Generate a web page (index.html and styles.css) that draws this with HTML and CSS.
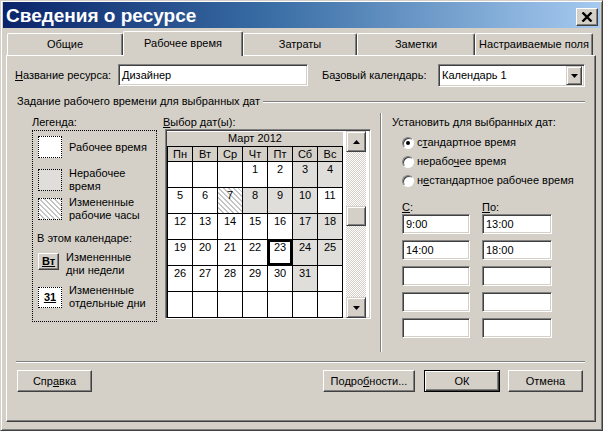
FILE: index.html
```html
<!DOCTYPE html>
<html lang="ru">
<head>
    <meta charset="UTF-8">
    <title>Сведения о ресурсе</title>
    <link rel="stylesheet" href="styles.css">
</head>
<body>
    <div class="window">
        <div class="titlebar">
            <span class="title">Сведения о ресурсе</span>
            <span class="close-btn">
                <svg width="12" height="10" viewBox="0 0 12 10"><path d="M1.5 0.5 L10.5 9.5 M10.5 0.5 L1.5 9.5" stroke="#000" stroke-width="2.4" fill="none"/></svg>
            </span>
        </div>

        <div class="tabs">
            <div class="tab tab-general">Общие</div>
            <div class="tab selected">Рабочее время</div>
            <div class="tab tab-cost">Затраты</div>
            <div class="tab tab-notes">Заметки</div>
            <div class="tab tab-fields">Настраиваемые поля</div>
        </div>

        <div class="panel">
            <div class="name-row">
                <label class="name-label"><u>Н</u>азвание ресурса:</label>
                <div class="field name-field">Дизайнер</div>
                <label class="base-label">Ба<u>з</u>овый календарь:</label>
                <div class="field select-field">
                    <span>Календарь 1</span>
                    <span class="drop-btn">
                        <svg width="7" height="4" viewBox="0 0 7 4"><path d="M0 0 H7 L3.5 4 Z" fill="#000"/></svg>
                    </span>
                </div>
            </div>

            <div class="group-title">
                <span>Задание рабочего времени для выбранных дат</span>
                <span class="etched-line"></span>
            </div>

            <div class="group-body">
                <div class="legend-col">
                    <div class="caption">Легенда:</div>
                    <div class="legend-box">
                        <div class="legend-item">
                            <div class="swatch"></div>
                            <div>Рабочее время</div>
                        </div>
                        <div class="legend-item item-nonwork">
                            <div class="swatch swatch-grey"></div>
                            <div>Нерабочее<br>время</div>
                        </div>
                        <div class="legend-item item-changed">
                            <div class="swatch swatch-hatch"></div>
                            <div>Измененные<br>рабочие часы</div>
                        </div>
                        <div class="legend-sub">В этом календаре:</div>
                        <div class="legend-item item-week">
                            <div class="day-mark mark-week">Вт</div>
                            <div>Измененные<br>дни недели</div>
                        </div>
                        <div class="legend-item item-days">
                            <div class="day-mark mark-day">31</div>
                            <div>Измененные<br>отдельные дни</div>
                        </div>
                    </div>
                </div>

                <div class="calendar-col">
                    <div class="caption"><u>В</u>ыбор дат(ы):</div>
                    <div class="calendar">
                        <div class="cal-main">
                            <div class="cal-month">Март 2012</div>
                            <div class="cal-grid">
                                <div class="dname">Пн</div>
                                <div class="dname">Вт</div>
                                <div class="dname">Ср</div>
                                <div class="dname">Чт</div>
                                <div class="dname">Пт</div>
                                <div class="dname">Сб</div>
                                <div class="dname">Вс</div>

                                <div class="day"></div>
                                <div class="day"></div>
                                <div class="day"></div>
                                <div class="day">1</div>
                                <div class="day">2</div>
                                <div class="day off">3</div>
                                <div class="day off">4</div>

                                <div class="day">5</div>
                                <div class="day">6</div>
                                <div class="day changed">7</div>
                                <div class="day off">8</div>
                                <div class="day off">9</div>
                                <div class="day off">10</div>
                                <div class="day">11</div>

                                <div class="day">12</div>
                                <div class="day">13</div>
                                <div class="day">14</div>
                                <div class="day">15</div>
                                <div class="day">16</div>
                                <div class="day off">17</div>
                                <div class="day off">18</div>

                                <div class="day">19</div>
                                <div class="day">20</div>
                                <div class="day">21</div>
                                <div class="day">22</div>
                                <div class="day current">23</div>
                                <div class="day off">24</div>
                                <div class="day off">25</div>

                                <div class="day">26</div>
                                <div class="day">27</div>
                                <div class="day">28</div>
                                <div class="day">29</div>
                                <div class="day">30</div>
                                <div class="day off">31</div>
                                <div class="day"></div>

                                <div class="day"></div>
                                <div class="day"></div>
                                <div class="day"></div>
                                <div class="day"></div>
                                <div class="day"></div>
                                <div class="day"></div>
                                <div class="day"></div>
                            </div>
                        </div>
                        <div class="scrollbar">
                            <div class="sb-btn">
                                <svg width="7" height="4" viewBox="0 0 7 4"><path d="M3.5 0 L7 4 H0 Z" fill="#000"/></svg>
                            </div>
                            <div class="sb-track">
                                <div class="sb-thumb"></div>
                            </div>
                            <div class="sb-btn">
                                <svg width="7" height="4" viewBox="0 0 7 4"><path d="M0 0 H7 L3.5 4 Z" fill="#000"/></svg>
                            </div>
                        </div>
                    </div>
                </div>

                <div class="vdivider"></div>

                <div class="set-col">
                    <div class="set-title">Установить для выбранных дат:</div>
                    <div class="radio-row"><span class="radio checked"></span><span>с<u>т</u>андартное время</span></div>
                    <div class="radio-row"><span class="radio"></span><span>нерабо<u>ч</u>ее время</span></div>
                    <div class="radio-row"><span class="radio"></span><span>н<u>е</u>стандартное рабочее время</span></div>

                    <div class="time-grid">
                        <div class="time-label"><u>С</u>:</div>
                        <div class="time-label"><u>П</u>о:</div>
                        <div class="field time-field">9:00</div>
                        <div class="field time-field">13:00</div>
                        <div class="field time-field">14:00</div>
                        <div class="field time-field">18:00</div>
                        <div class="field time-field"></div>
                        <div class="field time-field"></div>
                        <div class="field time-field"></div>
                        <div class="field time-field"></div>
                        <div class="field time-field"></div>
                        <div class="field time-field"></div>
                    </div>
                </div>
            </div>

            <div class="hseparator"></div>

            <div class="button-row">
                <div class="btn btn-help">Спр<u>а</u>вка</div>
                <div class="btn btn-details">Подро<u>б</u>ности...</div>
                <div class="btn btn-ok">ОК</div>
                <div class="btn btn-cancel">Отмена</div>
            </div>
        </div>
    </div>
</body>
</html>
```

FILE: styles.css
```css
body {
    margin: 0;
    padding: 0;
    font-family: "Liberation Sans", Arial, sans-serif;
    font-size: 11px;
    line-height: 13px;
    color: #000;
    background-color: #d4d0c8;
}

/* окно */
.window {
    width: 603px;
    height: 431px;
    box-sizing: border-box;
    background-color: #d4d0c8;
    border: 1px solid;
    border-color: #d4d0c8 #404040 #404040 #d4d0c8;
    box-shadow: inset 1px 1px #fff, inset -1px -1px #808080;
    padding: 1px 2px 2px 2px;
    display: flex;
    flex-direction: column;
}

.titlebar {
    height: 26px;
    flex-shrink: 0;
    display: flex;
    align-items: flex-start;
    background: linear-gradient(to right, #0a246a, #3a6ea5 45%, #a6caf0);
}

.title {
    color: #fff;
    font-weight: bold;
    font-size: 19px;
    line-height: 27px;
    padding-left: 3px;
    flex: 1;
}

.close-btn {
    width: 22px;
    height: 18px;
    box-sizing: border-box;
    margin: 6px 2px 0 0;
    background-color: #d4d0c8;
    border: 1px solid;
    border-color: #fff #404040 #404040 #fff;
    box-shadow: inset -1px -1px #808080;
    display: flex;
    align-items: center;
    justify-content: center;
}

/* вкладки */
.tabs {
    height: 27px;
    flex-shrink: 0;
    display: flex;
    align-items: flex-end;
    padding-left: 4px;
}

.tab {
    height: 22px;
    box-sizing: border-box;
    border-top: 1px solid #fff;
    border-left: 1px solid #fff;
    border-right: 1px solid #404040;
    box-shadow: inset -1px 0 #808080;
    border-radius: 2px 2px 0 0;
    text-align: center;
    line-height: 21px;
}

.tab-general { width: 116px; }
.tab-cost { width: 114px; }
.tab-notes { width: 118px; }
.tab-fields { width: 118px; }

.tab.selected {
    width: 120px;
    height: 25px;
    margin-bottom: -1px;
    position: relative;
    z-index: 1;
    background-color: #d4d0c8;
    line-height: 22px;
}

/* страница */
.panel {
    flex: 1;
    margin: 0 4px 6px 3px;
    border: 1px solid;
    border-color: #fff #404040 #404040 #fff;
    box-shadow: inset -1px -1px #808080;
    padding: 8px 10px 0 8px;
    display: flex;
    flex-direction: column;
}

.field {
    box-sizing: border-box;
    background-color: #fff;
    border: 1px solid;
    border-color: #808080 #fff #fff #808080;
    box-shadow: inset 1px 1px #404040, inset -1px -1px #d4d0c8;
    padding: 0 3px;
}

.name-row {
    height: 23px;
    display: flex;
    align-items: center;
}

.name-label {
    width: 103px;
}

.name-field {
    width: 190px;
    height: 22px;
    line-height: 20px;
    align-self: flex-start;
}

.base-label {
    width: 116px;
    margin-left: 14px;
}

.select-field {
    width: 147px;
    height: 23px;
    display: flex;
    align-items: center;
    justify-content: space-between;
    padding-right: 2px;
}

.drop-btn {
    width: 16px;
    height: 19px;
    box-sizing: border-box;
    background-color: #d4d0c8;
    border: 1px solid;
    border-color: #d4d0c8 #404040 #404040 #d4d0c8;
    box-shadow: inset 1px 1px #fff, inset -1px -1px #808080;
    display: flex;
    align-items: center;
    justify-content: center;
}

.group-title {
    margin-top: 8px;
    padding-left: 2px;
    display: flex;
    align-items: center;
}

.etched-line {
    flex: 1;
    height: 0;
    margin-left: 3px;
    border-top: 1px solid #808080;
    border-bottom: 1px solid #fff;
}

.group-body {
    margin-top: 5px;
    height: 239px;
    display: flex;
}

.caption {
    height: 13px;
}

/* легенда */
.legend-col {
    margin-left: 17px;
    padding-top: 3px;
}

.legend-box {
    width: 125px;
    height: 192px;
    box-sizing: border-box;
    margin-top: 1px;
    border: 1px dotted #000;
    padding: 5px 0 0 5px;
}

.legend-item {
    display: flex;
    align-items: center;
    gap: 7px;
}

.item-nonwork { margin-top: 9px; }
.item-changed { margin-top: 3px; }
.item-week { margin-top: 6px; align-items: flex-start; }
.item-days { margin-top: 7px; }

.legend-sub {
    margin-top: 10px;
    margin-left: -1px;
}

.swatch {
    width: 24px;
    height: 22px;
    box-sizing: border-box;
    border: 1px dotted #000;
    background-color: #fff;
}

.swatch-grey, .day.off {
    background-color: #dfdedb;
}

.swatch-hatch, .day.changed {
    background: repeating-linear-gradient(45deg, #c4c4c4 0 1px, #fff 1px 3.5px);
}

.day-mark {
    box-sizing: border-box;
    font-weight: bold;
    text-decoration: underline;
    text-align: center;
}

.mark-week {
    width: 21px;
    height: 17px;
    margin-top: 2px;
    line-height: 14px;
    border: 1px solid;
    border-color: #fff #404040 #404040 #fff;
    box-shadow: inset -1px -1px #808080;
}

.mark-day {
    width: 24px;
    height: 21px;
    line-height: 19px;
    border: 1px dotted #000;
    background-color: #fff;
}

/* календарь */
.calendar-col {
    margin-left: 6px;
    padding-top: 3px;
}

.calendar {
    margin-left: 2px;
    width: 206px;
    box-sizing: border-box;
    border: 1px solid;
    border-color: #808080 #fff #fff #808080;
    box-shadow: inset 1px 1px #404040, inset -1px -1px #d4d0c8;
    background-color: #fff;
    padding: 1px 0 0 1px;
    display: flex;
}

.cal-main {
    width: 176px;
}

.cal-month {
    height: 15px;
    line-height: 15px;
    text-align: center;
    background-color: #d4d0c8;
    box-shadow: inset 0 1px #fff;
}

.cal-grid {
    display: grid;
    grid-template-columns: repeat(7, 24px);
    grid-template-rows: 14px repeat(6, 25px);
    gap: 1px;
    padding: 1px;
    background-color: #000;
}

.dname {
    background-color: #d4d0c8;
    text-align: center;
    line-height: 14px;
}

.day {
    background-color: #fff;
    text-align: center;
    padding-top: 1px;
}

.day.current {
    box-shadow: inset 0 0 0 2px #000;
}

.scrollbar {
    width: 20px;
    height: 187px;
    margin-left: 3px;
    display: flex;
    flex-direction: column;
}

.sb-btn, .sb-thumb {
    box-sizing: border-box;
    background-color: #d4d0c8;
    border: 1px solid;
    border-color: #d4d0c8 #404040 #404040 #d4d0c8;
    box-shadow: inset 1px 1px #fff, inset -1px -1px #808080;
}

.sb-btn {
    height: 21px;
    display: flex;
    align-items: center;
    justify-content: center;
}

.sb-track {
    flex: 1;
    background: repeating-conic-gradient(#d4d0c8 0 25%, #fff 0 50%) 0 0 / 2px 2px;
}

.sb-thumb {
    height: 20px;
    margin-top: 54px;
}

.vdivider {
    width: 0;
    margin-left: 9px;
    border-left: 1px solid #808080;
    border-right: 1px solid #fff;
}

/* правая часть */
.set-col {
    margin-left: 10px;
    padding-top: 3px;
}

.radio-row {
    height: 19px;
    margin-left: 10px;
    display: flex;
    align-items: center;
}

.set-title {
    margin-bottom: 4px;
}

.radio {
    width: 12px;
    height: 12px;
    box-sizing: border-box;
    margin-right: 3px;
    border-radius: 50%;
    background-color: #fff;
    border: 1px solid;
    border-color: #808080 #fff #fff #808080;
    box-shadow: inset 1px 1px #404040;
    display: flex;
    align-items: center;
    justify-content: center;
}

.radio.checked::after {
    content: "";
    width: 4px;
    height: 4px;
    border-radius: 50%;
    background-color: #000;
}

.time-grid {
    margin: 11px 0 0 10px;
    display: grid;
    grid-template-columns: 68px 70px;
    column-gap: 12px;
    row-gap: 6px;
}

.time-label {
    margin-bottom: -6px;
}

.time-field {
    height: 20px;
    line-height: 18px;
}

.hseparator {
    margin: 9px 0 0 1px;
    border-top: 1px solid #808080;
    border-bottom: 1px solid #fff;
}

/* кнопки */
.button-row {
    margin-top: 7px;
    display: flex;
}

.btn {
    height: 22px;
    box-sizing: border-box;
    text-align: center;
    line-height: 20px;
    border: 1px solid;
    border-color: #fff #404040 #404040 #fff;
    box-shadow: inset -1px -1px #808080;
}

.btn-help {
    width: 75px;
    margin-left: 2px;
}

.btn-details {
    width: 92px;
    margin-left: auto;
}

.btn-ok {
    width: 76px;
    margin-left: 9px;
    border-color: #000;
    box-shadow: inset 1px 1px #fff, inset -1px -1px #404040, inset -2px -2px #808080;
}

.btn-cancel {
    width: 75px;
    margin-left: 8px;
    margin-right: 2px;
}
```
